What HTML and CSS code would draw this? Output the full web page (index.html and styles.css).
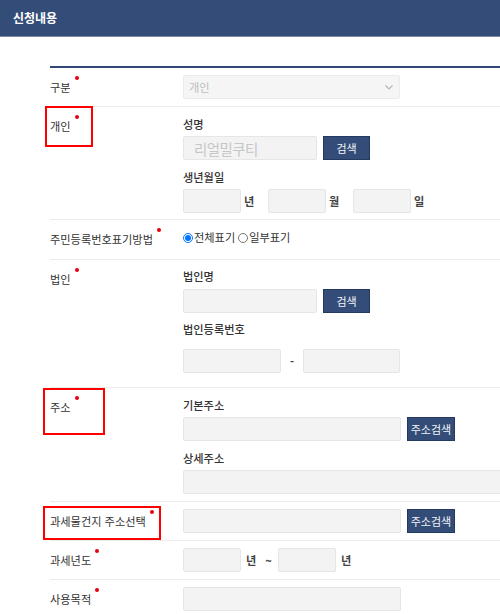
FILE: index.html
```html
<!DOCTYPE html>
<html lang="ko">
<head>
<meta charset="utf-8">
<title>신청내용</title>
<link rel="stylesheet" href="styles.css">
</head>
<body>
<header class="page-head"><h1 class="page-title">신청내용</h1></header>
<section class="form">
  <div class="row">
    <div class="label"><span class="req">구분</span></div>
    <div class="field pad-single">
      <div class="select"><span>개인</span>
        <svg class="chev" width="8" height="5" viewBox="0 0 8 5"><path d="M0.5 0.5 L4 4 L7.5 0.5" fill="none" stroke="#b5b5b5" stroke-width="1.2"/></svg>
      </div>
    </div>
  </div>

  <div class="row">
    <div class="label"><span class="req">개인</span><span class="mark mark-person"></span></div>
    <div class="field pad-person">
      <div class="sub">성명</div>
      <div class="line"><input class="inp w134 big" value="리얼밀쿠티" readonly><button class="btn" type="button">검색</button></div>
      <div class="sub sub-next">생년월일</div>
      <div class="line">
        <input class="inp w58"><span class="unit">년</span>
        <input class="inp w58"><span class="unit">월</span>
        <input class="inp w58"><span class="unit">일</span>
      </div>
    </div>
  </div>

  <div class="row">
    <div class="label"><span class="req">주민등록번호표기방법</span></div>
    <div class="field pad-radio">
      <div class="radios">
        <label class="opt"><input type="radio" name="disp" checked>전체표기</label>
        <label class="opt"><input type="radio" name="disp">일부표기</label>
      </div>
    </div>
  </div>

  <div class="row">
    <div class="label"><span class="req">법인</span></div>
    <div class="field pad-corp">
      <div class="sub">법인명</div>
      <div class="line"><input class="inp w134"><button class="btn" type="button">검색</button></div>
      <div class="sub sub-corp">법인등록번호</div>
      <div class="line">
        <input class="inp w98"><span class="dash">-</span><input class="inp w97">
      </div>
    </div>
  </div>

  <div class="row">
    <div class="label"><span class="req">주소</span><span class="mark mark-addr"></span></div>
    <div class="field pad-addr">
      <div class="sub">기본주소</div>
      <div class="line"><input class="inp w218"><button class="btn btn-wide" type="button">주소검색</button></div>
      <div class="sub sub-next">상세주소</div>
      <div class="line"><input class="inp w340"></div>
    </div>
  </div>

  <div class="row">
    <div class="label"><span class="req">과세물건지 주소선택</span><span class="mark mark-tax"></span></div>
    <div class="field pad-obj">
      <div class="line"><input class="inp w218"><button class="btn btn-wide" type="button">주소검색</button></div>
    </div>
  </div>

  <div class="row">
    <div class="label"><span class="req">과세년도</span></div>
    <div class="field pad-single">
      <div class="line">
        <input class="inp w58"><span class="unit-y">년</span><span class="tilde">~</span><input class="inp w58 yr2"><span class="unit-y">년</span>
      </div>
    </div>
  </div>

  <div class="row">
    <div class="label"><span class="req">사용목적</span></div>
    <div class="field pad-single">
      <div class="line"><input class="inp w218"></div>
    </div>
  </div>
</section>
</body>
</html>
```

FILE: styles.css
```css
* { box-sizing: border-box; }
html, body { margin: 0; padding: 0; }
body {
  overflow: hidden;
  background: #fff;
  color: #333;
  font-family: "Noto Sans CJK KR", "Noto Sans", sans-serif;
}

.page-head {
  height: 37px;
  background: #344d78;
  border-bottom: 1px solid #7d8aa3;
  display: flex;
  align-items: center;
  padding-left: 13px;
}
.page-title {
  margin: 0;
  font-size: 12px;
  font-weight: 700;
  color: #fff;
  line-height: 1;
}

.form {
  margin: 29px 0 0 50px;
  border-top: 2px solid #2f4877;
}
.row {
  display: grid;
  grid-template-columns: 133px 1fr;
  border-bottom: 1px solid #ececec;
}
.label {
  position: relative;
  line-height: 38px;
  font-size: 11.2px;
  color: #333;
  white-space: nowrap;
}
.req::after {
  content: "";
  display: inline-block;
  width: 4px;
  height: 4px;
  border-radius: 50%;
  background: #e5000f;
  vertical-align: 12px;
  margin-left: 4px;
}
.mark {
  position: absolute;
  border: 2px solid #ff0000;
}
.mark-person { left: -5px; top: -1px; width: 48px; height: 41px; }
.mark-addr { left: -7px; top: 0; width: 62px; height: 47px; }
.mark-tax { left: -7px; top: 4px; width: 118px; height: 34px; }

.field {
  font-size: 11.2px;
  min-width: 0;
}
.pad-single { padding: 7px 0; }
.pad-person { padding: 9px 0 6px; }
.pad-radio { padding: 7px 0 12px; }
.pad-corp { padding: 8px 0 14px; }
.pad-addr { padding: 9px 0 7px; }
.pad-obj { padding: 7px 0 6px; }

.sub {
  line-height: 16px;
  margin-bottom: 4px;
  font-weight: 500;
  color: #333;
}
.sub-next { margin-top: 9px; }
.sub-corp { margin-top: 8px; margin-bottom: 12px; }
.pad-corp .sub:first-child { margin-bottom: 5px; }

.line {
  display: flex;
  align-items: center;
  white-space: nowrap;
}

.inp {
  height: 24px;
  background: #f3f3f3;
  border: 1px solid #e6e6e6;
  border-radius: 2px;
  padding: 0 10px;
  margin: 0;
  font-family: inherit;
  font-size: 11px;
  color: #333;
  outline: none;
  flex: none;
}
.big {
  font-size: 14.5px;
  letter-spacing: -0.6px;
  color: #c6c6c6;
}
.w58 { width: 58px; }
.w97 { width: 97px; }
.w98 { width: 98px; }
.w134 { width: 134px; }
.w218 { width: 218px; }
.w340 { width: 340px; }

.btn {
  height: 24px;
  width: 47px;
  margin: 0 0 0 6px;
  padding: 0;
  background: #344d78;
  border: 1px solid #24395f;
  color: #f2f5fa;
  font-family: inherit;
  font-size: 11px;
  flex: none;
}
.btn-wide { width: 48px; }

.unit {
  width: 27px;
  padding-left: 3px;
  font-weight: 700;
  color: #444;
}

.select {
  width: 217px;
  height: 24px;
  background: #f5f5f5;
  border: 1px solid #ebebeb;
  border-radius: 2px;
  display: flex;
  align-items: center;
  justify-content: space-between;
  padding: 0 6px 0 5px;
  color: #bdbdbd;
}

.radios {
  display: flex;
  align-items: center;
  height: 20px;
}
.opt {
  display: flex;
  align-items: center;
  font-size: 11.2px;
  color: #333;
  margin-right: 3px;
}
.opt input {
  width: 10px;
  height: 10px;
  margin: 1px 1px 0 0;
}

.dash {
  width: 22px;
  text-align: center;
  font-weight: 700;
  color: #444;
}

.unit-y {
  margin-left: 5px;
  font-weight: 700;
  color: #444;
}
.tilde {
  margin-left: 9px;
  font-weight: 700;
  color: #444;
}
.yr2 { margin-left: 6px; }
```
